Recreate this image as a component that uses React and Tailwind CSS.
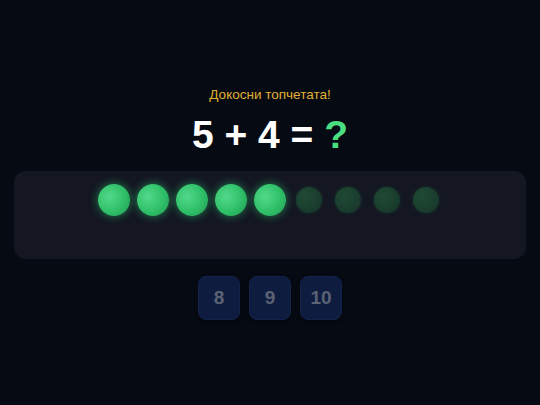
export default function App() {
  const total = 9;
  const filled = 5;
  const options = [8, 9, 10];

  return (
    <div
      className="w-[540px] h-[405px] bg-[#060a12] flex flex-col items-center"
      style={{ fontFamily: '"Liberation Sans", Arial, sans-serif' }}
    >
      {/* Prompt */}
      <div className="mt-[86px] text-[13.5px] leading-[18px] text-[#e0b032]">
        Докосни топчетата!
      </div>

      {/* Equation */}
      <div className="mt-[8px] text-[39px] leading-[46px] font-bold text-white">
        5 + 4 = <span className="text-[#4ade80]">?</span>
      </div>

      {/* Ball tray */}
      <div className="mt-[13px] w-[512px] h-[88px] rounded-[12px] bg-[#141722] flex justify-center pt-[13px]">
        <div className="flex gap-[7px] h-8 items-center">
          {Array.from({ length: total }).map((_, i) =>
            i < filled ? (
              <div
                key={i}
                className="w-8 h-8 rounded-full bg-[radial-gradient(circle_at_35%_40%,#52d98a_0%,#2fbf68_55%,#229a52_100%)] shadow-[0_0_9px_rgba(46,204,113,0.6)]"
              />
            ) : (
              <div key={i} className="w-8 h-8 flex items-center justify-center">
                <div className="w-[26px] h-[26px] rounded-full bg-[radial-gradient(circle_at_35%_35%,#1f4a35_0%,#1a3d2d_60%,#15302a_100%)] shadow-[0_0_4px_rgba(46,204,113,0.15)]" />
              </div>
            )
          )}
        </div>
      </div>

      {/* Answer options */}
      <div className="mt-[17px] flex gap-[9px]">
        {options.map((n) => (
          <button
            key={n}
            className="w-[42px] h-[44px] rounded-[8px] bg-[#0e1c40] border border-[#13224a] text-[#5a6274] text-[19px] font-bold flex items-center justify-center shadow-[0_2px_4px_rgba(0,0,0,0.4)]"
          >
            {n}
          </button>
        ))}
      </div>
    </div>
  );
}
